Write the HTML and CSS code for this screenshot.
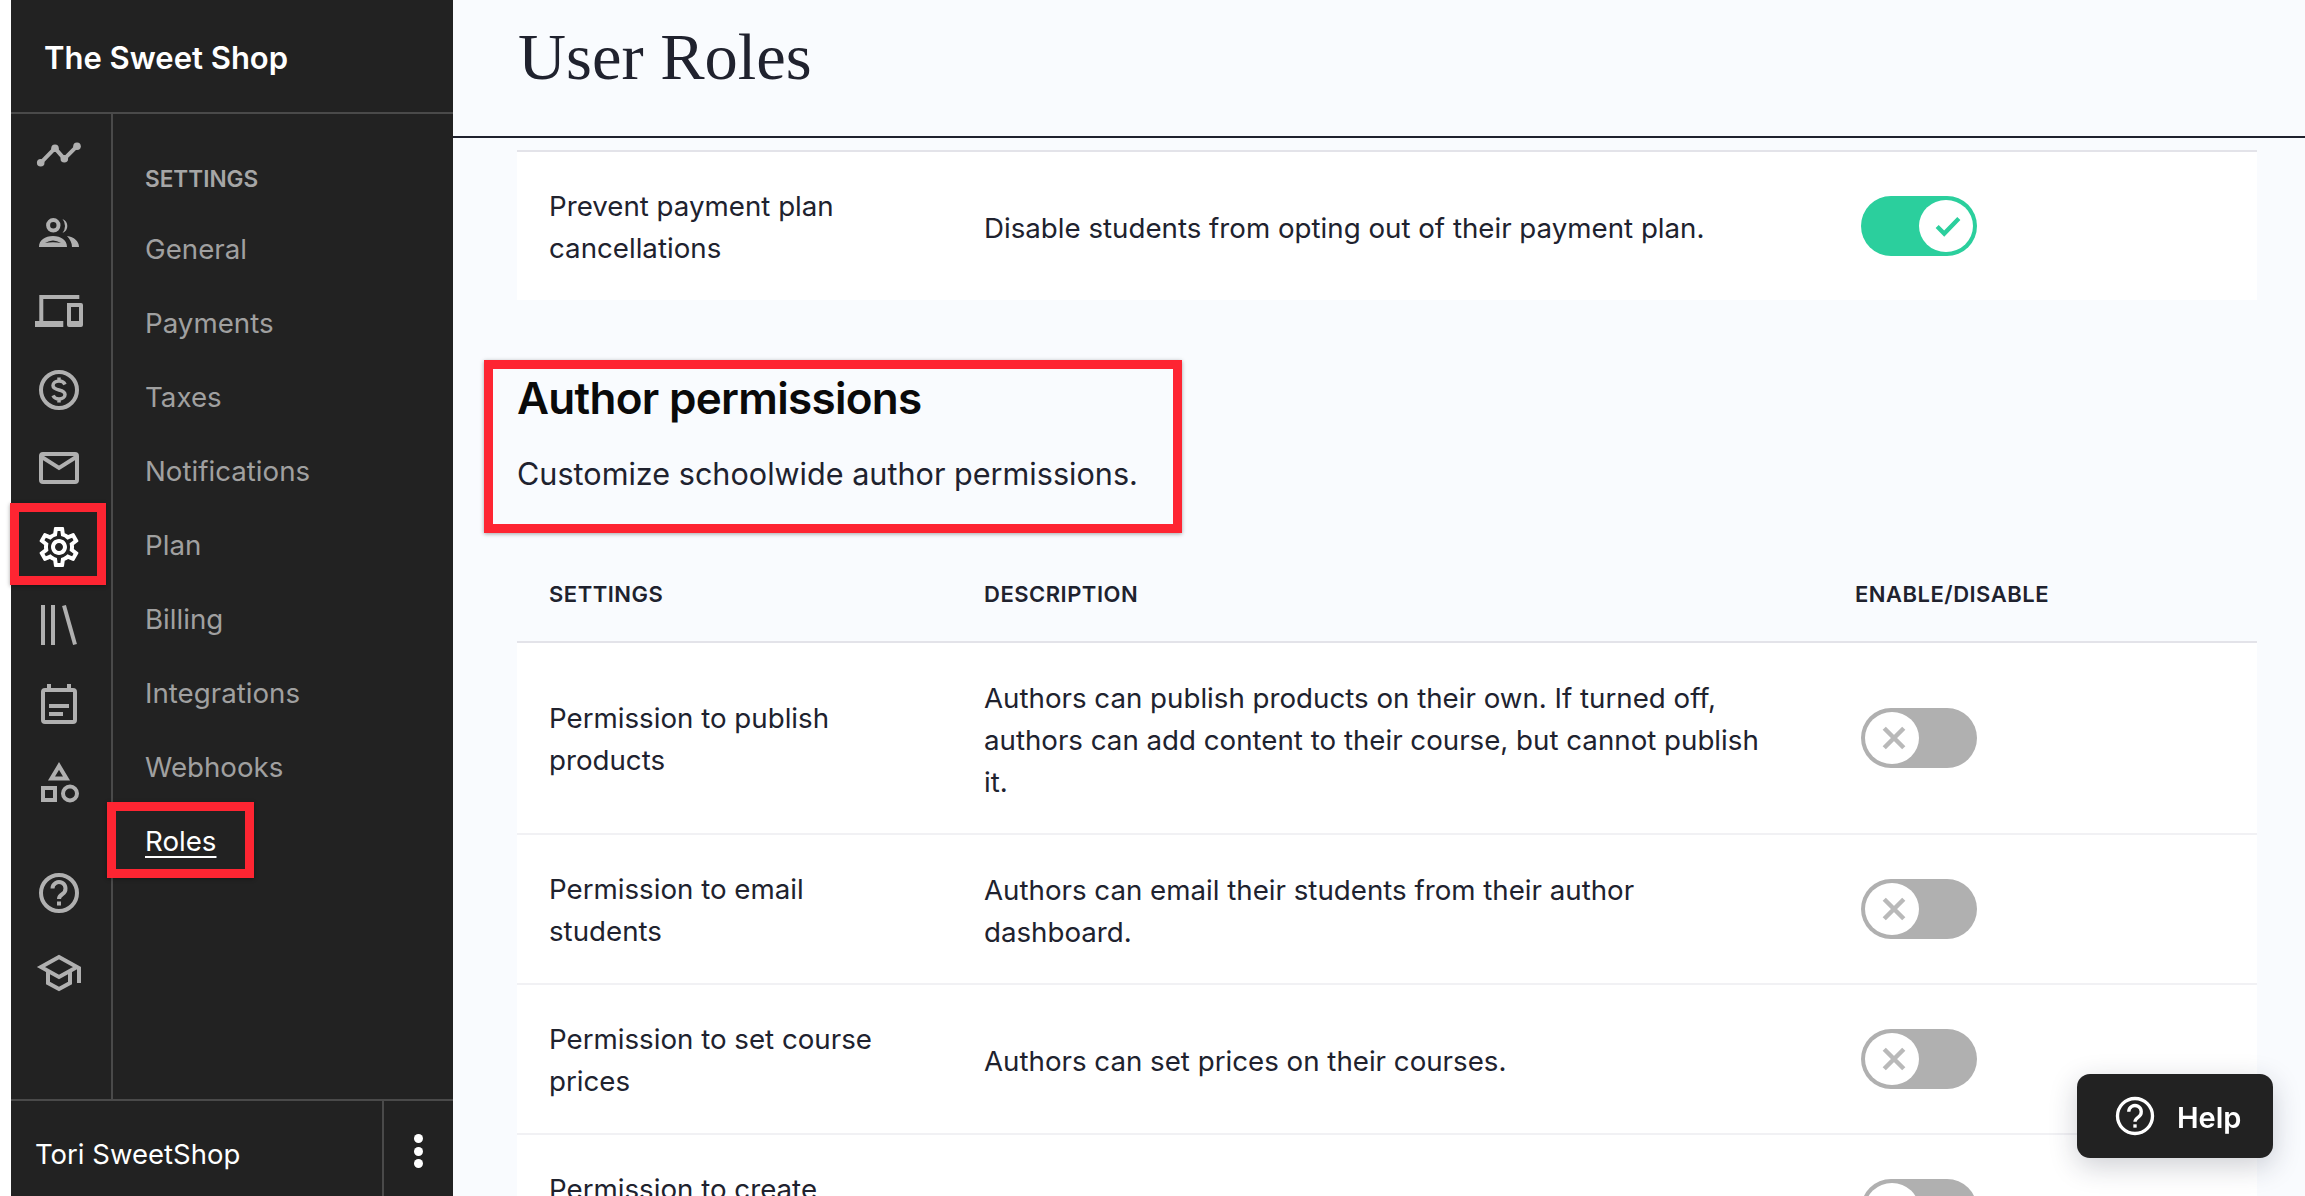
FILE: index.html
```html
<!DOCTYPE html>
<html lang="en">
<head>
<meta charset="utf-8">
<title>User Roles</title>
<link rel="stylesheet" href="styles.css">
</head>
<body>
<aside class="sidebar">
  <div class="brand">The Sweet Shop</div>
  <div class="side-middle">
    <nav class="rail">
      <a class="rail-item"><svg class="ico" viewBox="0 0 48 48"><path class="st" d="M5.700 32.800 20 18.200l9.300 10.600L42 16.200"/><circle class="fl" cx="5.700" cy="32.800" r="3.800"/><circle class="fl" cx="20" cy="18.200" r="3.800"/><circle class="fl" cx="29.300" cy="28.800" r="3.800"/><circle class="fl" cx="42" cy="16.200" r="3.800"/></svg></a>
      <a class="rail-item"><svg class="ico" viewBox="0 0 48 48"><circle class="st" cx="18.300" cy="16.300" r="5.200"/><path class="fl" d="M27.500 10a7.500 7.500 0 0 1 0 14 11 11 0 0 0 0-14zM4 38c0-7 6-11 14-11s14 4 14 11zM32 27c7 1 12 5 12 11h-7c0-4-2-8-5-11z"/><path class="hole" d="M10 34q8-5 16 0q-8-1.500-16 0z"/></svg></a>
      <a class="rail-item"><svg class="ico" viewBox="0 0 48 48"><path class="fl" fill-rule="evenodd" d="M4.300 8h40v4h-36v22h20v6H0v-6h4.300zM32 16h14a2 2 0 0 1 2 2v20a2 2 0 0 1-2 2H34a2 2 0 0 1-2-2zM36 20v14h8V20z"/></svg></a>
      <a class="rail-item"><svg class="ico" viewBox="0 0 48 48"><circle class="st" cx="24" cy="24" r="18"/><path class="st thin" d="M30 18.500c-1-2.500-3.500-3.500-6-3.500-3.500 0-6 2-6 4.500 0 6 12 3 12 9 0 2.500-2.500 4.500-6 4.500-3 0-5-1.500-6-3.500M24 11.500V15M24 33v3.500"/></svg></a>
      <a class="rail-item"><svg class="ico" viewBox="0 0 48 48"><rect class="st" x="6" y="10" width="36" height="28" rx="2"/><path class="st" d="M6 12.500 24 24l18-11.500"/></svg></a>
      <a class="rail-item active"><svg class="ico" viewBox="0 0 24 24"><path class="fl" d="M19.430 12.980c.04-.32.07-.64.07-.98 0-.34-.03-.66-.07-.98l2.110-1.650c.19-.15.24-.42.12-.64l-2-3.460c-.09-.16-.26-.25-.44-.25-.06 0-.12.01-.17.03l-2.490 1c-.52-.4-1.080-.73-1.690-.98l-.38-2.650C14.460 2.180 14.250 2 14 2h-4c-.25 0-.46.18-.49.42l-.38 2.650c-.61.25-1.170.59-1.690.98l-2.490-1c-.06-.02-.12-.03-.18-.03-.17 0-.34.09-.43.25l-2 3.460c-.13.22-.07.49.12.64l2.110 1.650c-.04.32-.07.65-.07.98 0 .33.03.66.07.98l-2.110 1.650c-.19.15-.24.42-.12.64l2 3.460c.09.16.26.25.44.25.06 0 .12-.01.17-.03l2.490-1c.52.4 1.080.73 1.690.98l.38 2.650c.03.24.24.42.49.42h4c.25 0 .46-.18.49-.42l.38-2.650c.61-.25 1.170-.59 1.690-.98l2.490 1c.06.02.12.03.18.03.17 0 .34-.09.43-.25l2-3.460c.12-.22.07-.49-.12-.64l-2.110-1.650zm-1.980-1.710c.04.31.05.52.05.73 0 .21-.02.43-.05.73l-.14 1.130.89.7 1.080.84-.7 1.210-1.270-.51-1.040-.42-.9.68c-.43.32-.84.56-1.250.73l-1.060.43-.16 1.130-.2 1.350h-1.400l-.19-1.350-.16-1.130-1.060-.43c-.43-.18-.83-.41-1.230-.71l-.91-.7-1.060.43-1.270.51-.7-1.210 1.080-.84.89-.7-.14-1.130c-.03-.31-.05-.54-.05-.74s.02-.43.05-.73l.14-1.130-.89-.7-1.080-.84.7-1.210 1.270.51 1.040.42.9-.68c.43-.32.84-.56 1.250-.73l1.060-.43.16-1.130.2-1.350h1.390l.19 1.350.16 1.130 1.060.43c.43.18.83.41 1.230.71l.91.7 1.060-.43 1.270-.51.7 1.210-1.070.85-.89.7.14 1.130zM12 8c-2.210 0-4 1.790-4 4s1.790 4 4 4 4-1.790 4-4-1.790-4-4-4zm0 6c-1.100 0-2-.9-2-2s.9-2 2-2 2 .9 2 2-.9 2-2 2z"/></svg><span class="callout"></span></a>
      <a class="rail-item"><svg class="ico" viewBox="0 0 48 48"><path class="fl" d="M6 4h4v40H6zM16 4h4v40h-4z"/><path class="st butt" d="m29 4.500 11 39"/></svg></a>
      <a class="rail-item"><svg class="ico" viewBox="0 0 48 48"><rect class="st" x="8" y="10" width="32" height="32" rx="2"/><path class="fl" d="M12 4h4v6h-4zM32 4h4v6h-4zM14 24h20v4H14zM14 32h14v4H14z"/></svg></a>
      <a class="rail-item"><svg class="ico" viewBox="0 0 48 48"><path class="st miter" d="M24 8 16.500 20.500h15z"/><rect class="st" x="8" y="30" width="12" height="12"/><circle class="st" cx="35" cy="35.500" r="7"/></svg></a>
      <a class="rail-item rail-gap"><svg class="ico" viewBox="0 0 48 48"><circle class="st" cx="24" cy="24" r="18"/><path class="st" d="M17.500 19.500a6.500 6.500 0 1 1 10 5.500c-2 1.300-3.500 2.300-3.500 5"/><path class="fl" d="M22 32.500h4v4h-4z"/></svg></a>
      <a class="rail-item rail-last"><svg class="ico" viewBox="0 0 48 48"><path class="st miter" d="M24 8 6 18l18 10 18-10z"/><path class="st miter" d="M13 23v11l11 6 11-6V23"/><path class="fl" d="M42 18h4v16h-4z"/></svg></a>
    </nav>
    <nav class="subnav">
      <div class="subnav-title">SETTINGS</div>
      <a class="subnav-link">General</a>
      <a class="subnav-link">Payments</a>
      <a class="subnav-link">Taxes</a>
      <a class="subnav-link">Notifications</a>
      <a class="subnav-link">Plan</a>
      <a class="subnav-link">Billing</a>
      <a class="subnav-link">Integrations</a>
      <a class="subnav-link">Webhooks</a>
      <a class="subnav-link current"><span class="current-text">Roles</span><span class="callout"></span></a>
    </nav>
  </div>
  <div class="side-foot">
    <div class="user">Tori SweetShop</div>
    <div class="more"><span></span><span></span><span></span></div>
  </div>
</aside>

<main class="main">
  <header class="page-head"><h1>User Roles</h1></header>
  <div class="content">
    <div class="table-top">
      <div class="row">
        <div class="c1">Prevent payment plan cancellations</div>
        <div class="c2">Disable students from opting out of their payment plan.</div>
        <div class="c3"><span class="toggle on"><span class="knob"><svg viewBox="0 0 24 24"><path d="M2 12.500 8.500 19 22 5"/></svg></span></span></div>
      </div>
    </div>

    <section class="section-head">
      <h2>Author permissions</h2>
      <p>Customize schoolwide author permissions.</p>
      <span class="callout"></span>
    </section>

    <div class="thead">
      <div class="c1">SETTINGS</div>
      <div class="c2">DESCRIPTION</div>
      <div class="c3">ENABLE/DISABLE</div>
    </div>
    <div class="tbody">
      <div class="row">
        <div class="c1">Permission to publish products</div>
        <div class="c2">Authors can publish products on their own. If turned off, authors can add content to their course, but cannot publish it.</div>
        <div class="c3"><span class="toggle off"><span class="knob"><svg viewBox="0 0 24 24"><path d="M3 3l18 18M21 3 3 21"/></svg></span></span></div>
      </div>
      <div class="row">
        <div class="c1">Permission to email students</div>
        <div class="c2">Authors can email their students from their author dashboard.</div>
        <div class="c3"><span class="toggle off"><span class="knob"><svg viewBox="0 0 24 24"><path d="M3 3l18 18M21 3 3 21"/></svg></span></span></div>
      </div>
      <div class="row">
        <div class="c1">Permission to set course prices</div>
        <div class="c2">Authors can set prices on their courses.</div>
        <div class="c3"><span class="toggle off"><span class="knob"><svg viewBox="0 0 24 24"><path d="M3 3l18 18M21 3 3 21"/></svg></span></span></div>
      </div>
      <div class="row">
        <div class="c1">Permission to create coupons</div>
        <div class="c2"></div>
        <div class="c3"><span class="toggle off"><span class="knob"><svg viewBox="0 0 24 24"><path d="M3 3l18 18M21 3 3 21"/></svg></span></span></div>
      </div>
    </div>
  </div>
</main>

<button class="help"><svg viewBox="0 0 48 48"><circle cx="24" cy="24" r="21"/><path d="M16.500 19a7.500 7.500 0 1 1 11.500 6.300c-2.300 1.500-4 2.700-4 5.700"/><rect x="22" y="34" width="4" height="4"/></svg><span>Help</span></button>
</body>
</html>
```
FILE: styles.css
```css
* { box-sizing: border-box; }
html, body { margin: 0; height: 100%; }
body {
  height: 1196px;
  overflow: hidden;
  display: flex;
  padding-left: 11px;
  background: #fff;
  font-family: Inter, "Liberation Sans", sans-serif;
  color: #20222e;
}

/* sidebar */
.sidebar {
  flex: 0 0 442px;
  height: 1196px;
  background: #222;
  display: flex;
  flex-direction: column;
}
.brand {
  flex: 0 0 114px;
  padding: 3px 0 0 33px;
  display: flex;
  align-items: center;
  border-bottom: 2px solid #4a4a4a;
  color: #fff;
  font-size: 31px;
  font-weight: 600;
}
.side-middle { flex: 1; display: flex; min-height: 0; }
.rail {
  flex: 0 0 102px;
  border-right: 2px solid #4a4a4a;
  padding-top: 1px;
  display: flex;
  flex-direction: column;
}
.rail-item {
  position: relative;
  flex: 0 0 78.5px;
  display: flex;
  align-items: center;
  justify-content: center;
}
.rail-gap { margin-top: 32px; }
.rail-last { margin-top: 1.5px; }
.ico { width: 48px; height: 48px; display: block; margin-right: 5px; }
.ico .st { fill: none; stroke: #b0b0b0; stroke-width: 4; }
.ico .st.thin { stroke-width: 3.5; }
.ico .st.butt { stroke-linecap: butt; }
.ico .st.miter { stroke-linejoin: miter; }
.ico .fl { fill: #b0b0b0; }
.ico .hole { fill: #222; }
.active .ico .fl { fill: #fff; }

.subnav { flex: 1; padding: 42px 0 0 32px; }
.subnav-title {
  height: 45px;
  display: flex;
  align-items: center;
  font-size: 22.6px;
  font-weight: 600;
  color: #a6a6a6;
}
.subnav-link {
  position: relative;
  display: flex;
  align-items: center;
  height: 74.1px;
  font-size: 27.7px;
  color: #a0a0a0;
}
.subnav-title + .subnav-link { margin-top: 10.5px; }
.current { color: #fff; }
.current-text { text-decoration: underline; text-underline-offset: 5px; text-decoration-thickness: 2px; }

.side-foot {
  flex: 0 0 97px;
  border-top: 2px solid #4a4a4a;
  display: flex;
}
.user {
  flex: 1;
  display: flex;
  align-items: center;
  padding: 10px 0 0 24px;
  color: #fff;
  font-size: 27.5px;
}
.more {
  flex: 0 0 71px;
  border-left: 2px solid #4a4a4a;
  display: flex;
  flex-direction: column;
  align-items: center;
  padding-top: 33px;
  gap: 3.5px;
}
.more span { width: 9px; height: 9px; border-radius: 50%; background: #fff; }

/* annotation frames */
.callout {
  position: absolute;
  border: 9px solid #fe2532;
  box-shadow: 0 1px 4px rgba(0, 0, 0, .35);
  pointer-events: none;
}
.rail-item .callout { left: -1px; top: -5px; width: 96px; height: 82px; }
.subnav-link .callout { left: -38px; top: -2px; width: 147px; height: 76px; }

/* main */
.main {
  flex: 1;
  min-width: 0;
  height: 1196px;
  overflow: hidden;
  background: #f9fbfe;
}
.page-head {
  height: 138px;
  border-bottom: 2px solid #20222e;
  padding-left: 65px;
}
.page-head h1 {
  margin: 0;
  padding-top: 19px;
  font-family: "Liberation Serif", serif;
  font-size: 66.5px;
  line-height: 76px;
  font-weight: 400;
  color: #20222e;
}
.content { padding: 12px 48px 0 64px; }
.table-top { border-top: 2px solid #e3e3e9; }

.row, .thead { display: flex; }
.row { background: #fff; align-items: center; font-size: 27.7px; line-height: 42px; }
.c1 { flex: 0 0 435px; padding: 33px 75px 31px 32px; }
.c2 { flex: 0 0 900px; padding: 33.5px 72px 30.5px 32px; }
.c3 { flex: 1; padding-left: 9px; display: flex; }
.tbody .row { border-bottom: 2px solid #f1f1f4; }

.section-head { position: relative; margin-top: 60px; height: 186px; padding-top: 10px; }
.section-head h2 {
  margin: 0;
  font-size: 44px;
  line-height: 56px;
  font-weight: 600;
  letter-spacing: -.7px;
  color: #0a0a0a;
}
.section-head p {
  margin: 26px 0 0;
  font-size: 30.6px;
  line-height: 44px;
  color: #20222e;
}
.section-head .callout { left: -33px; top: 0; width: 698px; height: 173px; }

.thead { height: 97px; border-bottom: 2px solid #e3e3e9; align-items: center; font-size: 22px; font-weight: 600; letter-spacing: .5px; }
.thead .c1, .thead .c2 { padding-top: 0; padding-bottom: 0; }
.thead .c3 { padding-left: 3px; }

/* toggles */
.toggle {
  width: 116px;
  height: 60px;
  border-radius: 30px;
  padding: 4px;
  display: flex;
}
.toggle.on { background: #2bcf9d; justify-content: flex-end; }
.toggle.off { background: #b0b0b0; }
.knob {
  width: 54px;
  height: 52px;
  border-radius: 50%;
  background: #fff;
  display: flex;
  align-items: center;
  justify-content: center;
  padding-left: 4px;
}
.knob svg { width: 26px; height: 26px; fill: none; stroke-width: 4; }
.on .knob svg { stroke: #2bcf9d; }
.off .knob svg { stroke: #b9b9b9; stroke-width: 4.2; }

/* help */
.help {
  position: fixed;
  left: 2077px;
  top: 1074px;
  width: 196px;
  height: 84px;
  border: 0;
  border-radius: 13px;
  background: #222;
  box-shadow: 0 8px 28px rgba(30, 35, 60, .22);
  display: flex;
  align-items: center;
  gap: 22px;
  padding: 0 0 0 38px;
  color: #fff;
  font: 600 29px Inter, sans-serif;
}
.help svg { width: 40px; height: 40px; fill: none; stroke: #fff; stroke-width: 4; }
.help span { padding-top: 2px; }
.help rect { fill: #fff; stroke: none; }
```
